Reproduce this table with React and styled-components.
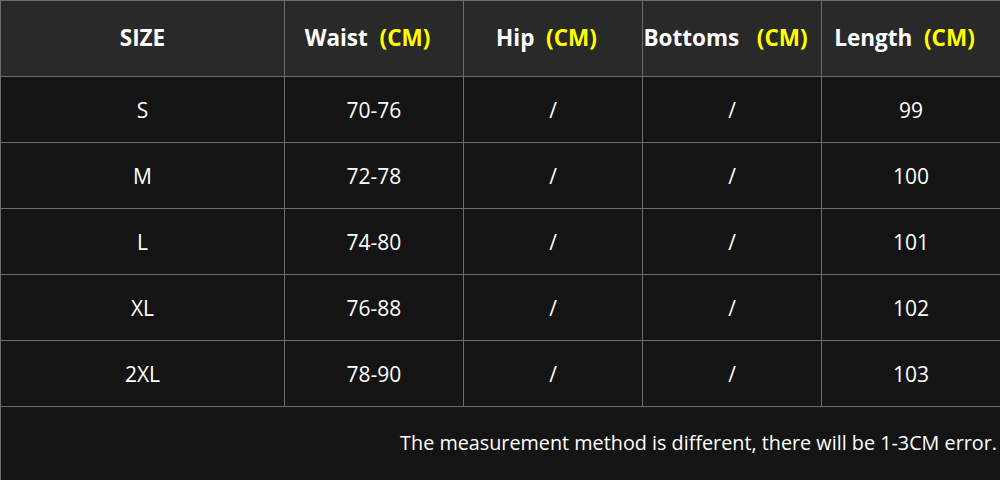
import React from 'react';
import styled, { createGlobalStyle } from 'styled-components';

const GlobalStyle = createGlobalStyle`
  html, body {
    margin: 0;
    padding: 0;
    background: #ffffff;
  }
  body {
    font-family: "Open Sans", "Noto Sans", "Liberation Sans", sans-serif;
  }
`;

const Table = styled.div`
  display: grid;
  grid-template-columns: 283px 178px 178px 178px 178px;
  grid-template-rows: 75px repeat(5, 65px) 73px;
  gap: 1px;
  padding: 1px 0 0 1px;
  width: 1000px;
  box-sizing: border-box;
  background: #6c6c6c;
`;

const HeadCell = styled.div`
  display: flex;
  align-items: center;
  justify-content: center;
  padding-bottom: 3px;
  padding-right: ${(p) => (p.$unit ? '13px' : '0')};
  background: #292929;
  color: #ffffff;
  font-size: 22.5px;
  font-weight: 700;
  white-space: pre;
`;

const Unit = styled.span`
  color: #ffff00;
`;

const Cell = styled.div`
  display: flex;
  align-items: center;
  justify-content: center;
  background: #141414;
  color: #ffffff;
  font-size: 21px;
`;

const Note = styled.div`
  grid-column: 1 / -1;
  display: flex;
  align-items: center;
  justify-content: flex-end;
  padding-right: 3px;
  padding-bottom: 2px;
  background: #141414;
  color: #ffffff;
  font-size: 19.8px;
`;

const headers = [
  { label: 'Waist', gap: '  ' },
  { label: 'Hip', gap: '  ' },
  { label: 'Bottoms', gap: '   ' },
  { label: 'Length', gap: '  ' },
];

const rows = [
  ['S', '70-76', '/', '/', '99'],
  ['M', '72-78', '/', '/', '100'],
  ['L', '74-80', '/', '/', '101'],
  ['XL', '76-88', '/', '/', '102'],
  ['2XL', '78-90', '/', '/', '103'],
];

export default function App() {
  return (
    <>
      <GlobalStyle />
      <Table>
        <HeadCell>SIZE</HeadCell>
        {headers.map((h) => (
          <HeadCell key={h.label} $unit>
            {h.label}
            {h.gap}
            <Unit>(CM)</Unit>
          </HeadCell>
        ))}
        {rows.map((row) =>
          row.map((value, i) => <Cell key={row[0] + i}>{value}</Cell>)
        )}
        <Note>The measurement method is different, there will be 1-3CM error.</Note>
      </Table>
    </>
  );
}
